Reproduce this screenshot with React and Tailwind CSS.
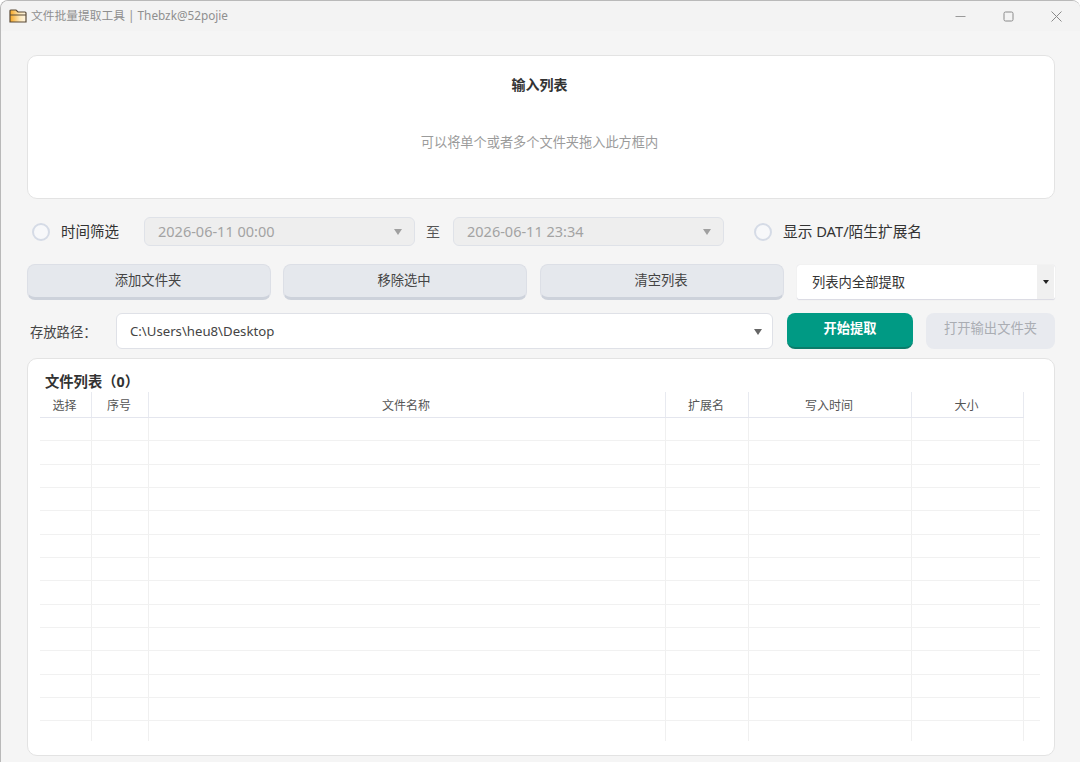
import React from "react";

const columns = [
    { label: "选择", width: "w-[52px]" },
    { label: "序号", width: "w-[57px]" },
    { label: "文件名称", width: "w-[517px]" },
    { label: "扩展名", width: "w-[83px]" },
    { label: "写入时间", width: "w-[163px]" },
    { label: "大小", width: "w-[112px]" },
];

const Caret = ({ color = "border-t-[#8a8a8a]" }) => (
    <span
        className={`h-0 w-0 border-x-[4.5px] border-t-[6px] border-x-transparent ${color}`}
    />
);

const Radio = ({ className }) => (
    <span
        className={`block h-[18px] w-[18px] shrink-0 rounded-full border-2 border-[#d5dbe6] bg-[#f7f8fa] ${className}`}
    />
);

const DateBox = ({ value, width }) => (
    <div
        className={`flex h-[29px] ${width} items-center justify-between rounded-md border border-[#dfe2e8] bg-[#eeeeee] pl-[13px] pr-[12px] text-[14.5px] text-[#a3a3a3]`}
    >
        <span>{value}</span>
        <Caret color="border-t-[#a0a0a0]" />
    </div>
);

const GrayButton = ({ children }) => (
    <button className="h-[36px] w-[244px] rounded-lg border border-[#dcdfe6] border-b-[3px] border-b-[#cdd2db] bg-[#e5e8ed] pb-[1px] pr-[2px] text-[13.3px] text-[#444]">
        {children}
    </button>
);

function App() {
    const rows = Array.from({ length: 14 });

    return (
        <div
            className="flex h-[762px] w-[1080px] flex-col overflow-hidden rounded-t-lg border-l border-t border-[#b9b9b9] bg-[#f5f5f5] text-[#333]"
            style={{
                fontFamily:
                    '"Noto Sans", "Noto Sans CJK SC", "Liberation Sans", sans-serif',
            }}
        >
            {/* Title bar */}
            <div className="flex h-[30px] shrink-0 items-center bg-[#f3f3f3] pl-[8px]">
                <svg width="18" height="14" viewBox="0 0 18 14">
                    <defs>
                        <linearGradient id="folder" x1="0" x2="1" y1="0" y2="0">
                            <stop offset="0" stopColor="#f5a623" />
                            <stop offset="0.6" stopColor="#fde7b8" />
                            <stop offset="1" stopColor="#fff6e3" />
                        </linearGradient>
                    </defs>
                    <path
                        d="M1 3V2a1 1 0 0 1 1-1h5l2 2h7a1 1 0 0 1 1 1v9H1z"
                        fill="url(#folder)"
                        stroke="#5a4a36"
                        strokeWidth="1.2"
                    />
                    <path d="M1 6h16" stroke="#5a4a36" strokeWidth="1.2" />
                </svg>
                <span className="ml-[4px] text-[11.75px] text-[#8f8f8f]">
                    文件批量提取工具 | Thebzk@52pojie
                </span>
                <div className="ml-auto flex items-center gap-[37px] pr-[18px]">
                    <svg width="11" height="11" viewBox="0 0 11 11">
                        <path d="M0.5 5.5h10" stroke="#9a9a9a" strokeWidth="1" />
                    </svg>
                    <svg width="11" height="11" viewBox="0 0 11 11">
                        <rect
                            x="1"
                            y="1"
                            width="9"
                            height="9"
                            rx="1.5"
                            fill="none"
                            stroke="#8a8a8a"
                            strokeWidth="1"
                        />
                    </svg>
                    <svg width="11" height="11" viewBox="0 0 11 11">
                        <path
                            d="M0.5 0.5l10 10M10.5 0.5l-10 10"
                            stroke="#8a8a8a"
                            strokeWidth="1"
                        />
                    </svg>
                </div>
            </div>

            <div className="flex flex-col pl-[26px] pt-[24px]">
                {/* Input list */}
                <div className="flex h-[144px] w-[1028px] flex-col items-center rounded-[10px] border border-[#e3e3e3] bg-white pr-[3px] pt-[19px]">
                    <div className="text-[14px] font-bold leading-[20px] text-[#333]">
                        输入列表
                    </div>
                    <div className="mt-[37px] text-[13.2px] leading-[20px] text-[#9b9b9b]">
                        可以将单个或者多个文件夹拖入此方框内
                    </div>
                </div>

                {/* Time filter */}
                <div className="mt-[18px] flex h-[29px] items-center">
                    <Radio className="ml-[5px]" />
                    <span className="ml-[11px] w-[83px] text-[14.5px] text-[#333]">
                        时间筛选
                    </span>
                    <DateBox value="2026-06-11 00:00" width="w-[271px]" />
                    <span className="ml-[11px] mr-[13px] w-[14px] text-[14px] text-[#555]">至</span>
                    <DateBox value="2026-06-11 23:34" width="w-[271px]" />
                    <Radio className="ml-[30px]" />
                    <span className="ml-[11px] text-[14.7px] text-[#333]">
                        显示 DAT/陌生扩展名
                    </span>
                </div>

                {/* Actions */}
                <div className="mt-[18px] flex h-[36px] items-start">
                    <GrayButton>添加文件夹</GrayButton>
                    <div className="w-[12px]" />
                    <GrayButton>移除选中</GrayButton>
                    <div className="w-[13px]" />
                    <GrayButton>清空列表</GrayButton>
                    <div className="ml-[13px] mt-px flex h-[35px] w-[258px] overflow-hidden rounded-[3px] border-b border-[#dcdce4] bg-white shadow-[0_0_1px_#cfcfd6]">
                        <span className="flex flex-1 items-center pl-[15px] pt-[1px] text-[13.3px] text-[#333]">
                            列表内全部提取
                        </span>
                        <span className="mr-px flex w-[17px] items-center justify-center bg-[#f0f0f0]">
                            <span className="h-0 w-0 border-x-[3px] border-t-[4px] border-x-transparent border-t-[#222]" />
                        </span>
                    </div>
                </div>

                {/* Output path */}
                <div className="mt-[13px] flex h-[36px] items-start">
                    <span className="ml-[3px] w-[86px] pt-[9px] text-[13.3px] leading-[20px] text-[#444]">
                        存放路径：
                    </span>
                    <div className="flex h-[36px] w-[657px] items-center justify-between rounded-md border border-[#dfe1e7] bg-white pl-[13px] pr-[10px] pt-[2px] text-[13.2px] text-[#444]">
                        <span>C:\Users\heu8\Desktop</span>
                        <Caret color="border-t-[#666]" />
                    </div>
                    <button className="ml-[14px] h-[36px] w-[126px] rounded-lg border-b-2 border-b-[#0a7c6a] bg-[#009a84] pb-[3px] text-[13.25px] font-bold text-white">
                        开始提取
                    </button>
                    <button className="ml-[13px] h-[36px] w-[129px] rounded-lg bg-[#e8eaef] pb-[4px] text-[13.3px] text-[#aaadb3]">
                        打开输出文件夹
                    </button>
                </div>

                {/* File list */}
                <div className="mt-[9px] h-[398px] w-[1028px] rounded-[10px] border border-[#e3e3e3] bg-white pl-[12px] pt-[13px]">
                    <div className="pl-[5px] text-[14.3px] font-bold leading-[20px] text-[#333]">
                        文件列表（0）
                    </div>
                    <div className="w-[1000px]">
                        <div className="flex h-[26px] w-[984px] border-b border-[#e4e6ee]">
                            {columns.map((col) => (
                                <div
                                    key={col.label}
                                    className={`flex ${col.width} items-center justify-center border-r border-[#e8eaf0] pr-[2px] pt-[3px] text-[12px] text-[#555]`}
                                >
                                    {col.label}
                                </div>
                            ))}
                        </div>
                        {rows.map((_, i) => (
                            <div
                                key={i}
                                className={`flex ${i < 13 ? "h-[23.33px] border-b border-[#f1f1f1]" : "h-[20px]"}`}
                            >
                                {columns.map((col) => (
                                    <div
                                        key={col.label}
                                        className={`${col.width} border-r border-[#f0f0f0]`}
                                    />
                                ))}
                            </div>
                        ))}
                    </div>
                </div>
            </div>
        </div>
    );
}

export default App;
